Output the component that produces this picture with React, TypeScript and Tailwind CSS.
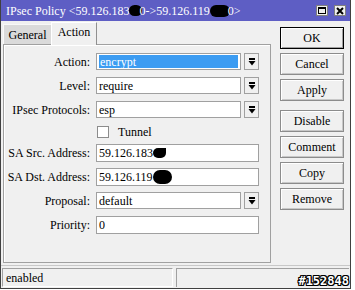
import React from 'react';

const serif = "font-['Liberation_Serif','DejaVu_Serif',serif]";

function DropArrow() {
  return (
    <div className="w-[15px] h-[17px] border border-[#a0a0a0] bg-[#f0f0f0] flex items-center justify-center">
      <svg width="8" height="8" viewBox="0 0 8 8">
        <rect x="1" y="0" width="6" height="2" fill="#000" />
        <path d="M0.5 3h7L4 7.5z" fill="#000" />
      </svg>
    </div>
  );
}

function Blob({ w, h, cls = '' }: { w: string; h: string; cls?: string }) {
  return <span className={`inline-block bg-black rounded-full align-middle ${w} ${h} ${cls}`} />;
}

function Row({ label, children, mt }: { label: string; children: React.ReactNode; mt: string }) {
  return (
    <div className={`flex items-center h-[17px] ${mt}`}>
      <div className="w-[87px] text-right pr-[1px] text-[12px] leading-none text-black">{label}</div>
      <div className="ml-[5px] flex items-center gap-[3px]">{children}</div>
    </div>
  );
}

function Select({ value, active }: { value: string; active?: boolean }) {
  return (
    <>
      <div className="w-[145px] h-[17px] border border-[#a0a0a0] bg-white flex items-center text-[12px] leading-none px-[2px]">
        {active ? (
          <span className="bg-[#3c9cf2] text-white w-full h-[13px] flex items-center px-[1px]">{value}</span>
        ) : (
          <span className="text-black">{value}</span>
        )}
      </div>
      <DropArrow />
    </>
  );
}

function TextField({ children }: { children: React.ReactNode }) {
  return (
    <div className="w-[163px] h-[18px] border border-[#a0a0a0] bg-white flex items-center px-[2px] text-[12px] leading-none text-black">
      {children}
    </div>
  );
}

function Btn({ label, def, mt }: { label: string; def?: boolean; mt: string }) {
  return (
    <div
      className={`w-[64px] h-[22px] ${mt} flex items-center justify-center text-[12px] text-black bg-[#f0f0f0] ${
        def
          ? 'border border-black shadow-[inset_1px_1px_0_#fff,inset_-1px_-1px_0_#a0a0a0]'
          : 'border border-[#8c8c8c] shadow-[inset_1px_1px_0_#fff,inset_-1px_-1px_0_#c8c8c8]'
      }`}
    >
      {label}
    </div>
  );
}

export default function App() {
  return (
    <div className={`w-[355px] h-[290px] bg-white ${serif}`}>
      <div className="w-[351px] h-[289px] flex flex-col bg-[#f0f0f0] border-l border-r border-b border-[#404040]">
        {/* title bar */}
        <div className="h-[21px] bg-[#5e5ec4] flex items-center pl-[5px] pr-[4px]">
          <div className="text-white text-[12px] leading-none whitespace-nowrap flex items-center">
            <span>IPsec Policy &lt;59.126.183</span>
            <Blob w="w-[13px]" h="h-[11px]" cls="-mr-[3px]" />
            <span>0-&gt;59.126.119</span>
            <Blob w="w-[20px]" h="h-[12px]" cls="-mr-[2px]" />
            <span>0&gt;</span>
          </div>
          <div className="ml-auto flex items-center gap-[6px]">
            <div className="w-[12px] h-[11px] bg-[#f0f0f0] border border-[#808080] flex items-center justify-center">
              <div className="w-[8px] h-[7px] border border-black border-t-2" />
            </div>
            <div className="w-[12px] h-[11px] bg-[#f0f0f0] border border-[#808080] flex items-center justify-center">
              <svg width="8" height="8" viewBox="0 0 8 8">
                <path d="M1 1L7 7M7 1L1 7" stroke="#000" strokeWidth="2" />
              </svg>
            </div>
          </div>
        </div>

        {/* body */}
        <div className="flex h-[244px]">
          <div className="w-[270px] pl-[2px] flex flex-col">
            <div className="flex items-end h-[23px]">
              <div className="w-[48px] h-[20px] bg-[#dadada] border-t border-l border-[#f8f8f8] flex items-center justify-center text-[12px] leading-none">
                General
              </div>
              <div className="w-[46px] h-[23px] bg-[#f0f0f0] border-t border-l border-white border-r border-r-[#909090] flex items-start justify-center pt-[3px] text-[12px] leading-none -mb-[1px] relative">
                Action
              </div>
            </div>
            <div className="h-[219px] border border-[#a0a0a0] shadow-[inset_1px_1px_0_#fff] pt-[8px]">
              <Row label="Action:" mt="mt-0">
                <Select value="encrypt" active />
              </Row>
              <Row label="Level:" mt="mt-[7px]">
                <Select value="require" />
              </Row>
              <Row label="IPsec Protocols:" mt="mt-[7px]">
                <Select value="esp" />
              </Row>
              <div className="flex items-center h-[13px] mt-[7px]">
                <div className="ml-[93px] w-[12px] h-[12px] bg-white border border-[#8c8c8c]" />
                <span className="ml-[9px] text-[12px] leading-none">Tunnel</span>
              </div>
              <Row label="SA Src. Address:" mt="mt-[6px]">
                <TextField>
                  <span>59.126.183</span>
                  <Blob w="w-[13px]" h="h-[10px]" cls="rounded-tr-[2px]" />
                </TextField>
              </Row>
              <Row label="SA Dst. Address:" mt="mt-[7px]">
                <TextField>
                  <span>59.126.119</span>
                  <Blob w="w-[19px]" h="h-[14px]" />
                </TextField>
              </Row>
              <Row label="Proposal:" mt="mt-[7px]">
                <Select value="default" />
              </Row>
              <Row label="Priority:" mt="mt-[7px]">
                <TextField>0</TextField>
              </Row>
            </div>
          </div>
          <div className="ml-[9px] pt-[6px] flex flex-col">
            <Btn label="OK" def mt="mt-0" />
            <Btn label="Cancel" mt="mt-[4px]" />
            <Btn label="Apply" mt="mt-[4px]" />
            <Btn label="Disable" mt="mt-[9px]" />
            <Btn label="Comment" mt="mt-[4px]" />
            <Btn label="Copy" mt="mt-[4px]" />
            <Btn label="Remove" mt="mt-[4px]" />
          </div>
        </div>

        {/* status bar */}
        <div className="flex-1 flex border-t border-[#c8c8c8] pt-[2px] pb-[1px] gap-[3px] px-[1px]">
          <div className="w-[171px] border-t border-l border-[#a0a0a0] border-b border-r border-b-white border-r-white flex items-center pl-[3px] text-[12px] leading-none">
            enabled
          </div>
          <div className="flex-1 border-t border-l border-[#a0a0a0] flex items-end justify-end relative">
            <span className="absolute right-[0px] bottom-[0px] font-['DejaVu_Sans_Mono',monospace] font-bold text-[12px] leading-none text-white [text-shadow:1px_0_0_#000,-1px_0_0_#000,0_1px_0_#000,0_-1px_0_#000,1px_1px_0_#000,-1px_-1px_0_#000,1px_-1px_0_#000,-1px_1px_0_#000]">
              #152848
            </span>
          </div>
        </div>
      </div>
    </div>
  );
}
